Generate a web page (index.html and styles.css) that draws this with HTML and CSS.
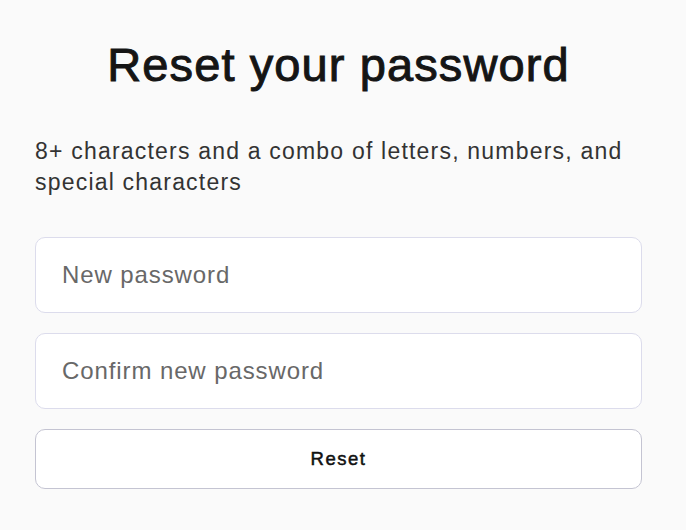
FILE: index.html
```html
<!DOCTYPE html>
<html lang="en">
<head>
<meta charset="utf-8">
<title>Reset your password</title>
<link rel="stylesheet" href="styles.css">
</head>
<body>
<main class="page">
  <h1 class="title">Reset your password</h1>
  <p class="hint">8+ characters and a combo of letters, numbers, and special characters</p>
  <form class="form">
    <input class="field" type="password" placeholder="New password">
    <input class="field" type="password" placeholder="Confirm new password">
    <button class="btn" type="button">Reset</button>
  </form>
</main>
</body>
</html>
```

FILE: styles.css
```css
html, body {
  margin: 0;
  padding: 0;
  background: #fafafa;
}
body {
  font-family: "Liberation Sans", Arial, sans-serif;
  color: #111;
}
.page {
  width: 607px;
  margin-left: 35px;
  padding-top: 39px;
}
.title {
  margin: 0;
  text-align: center;
  font-size: 47px;
  font-weight: 400;
  letter-spacing: 1.1px;
  -webkit-text-stroke: 1px #151515;
  line-height: 52px;
  color: #151515;
}
.hint {
  margin: 45px 0 0;
  font-size: 23px;
  letter-spacing: 1.2px;
  line-height: 31px;
  color: #333;
}
.form {
  display: flex;
  flex-direction: column;
  gap: 20px;
  margin-top: 39px;
}
.field {
  box-sizing: border-box;
  height: 76px;
  width: 100%;
  padding: 0 26px;
  border: 1px solid #dcdcec;
  border-radius: 10px;
  background: #fff;
  font-family: inherit;
  font-size: 24px;
  letter-spacing: 0.9px;
  color: #111;
  outline: none;
}
.field::placeholder {
  color: #686868;
}
.btn {
  box-sizing: border-box;
  height: 60px;
  width: 100%;
  border: 1px solid #c4c4d2;
  border-radius: 10px;
  background: #fff;
  font-family: inherit;
  font-size: 18.5px;
  font-weight: 400;
  letter-spacing: 1.5px;
  -webkit-text-stroke: 0.5px #111;
  color: #111;
}
```
